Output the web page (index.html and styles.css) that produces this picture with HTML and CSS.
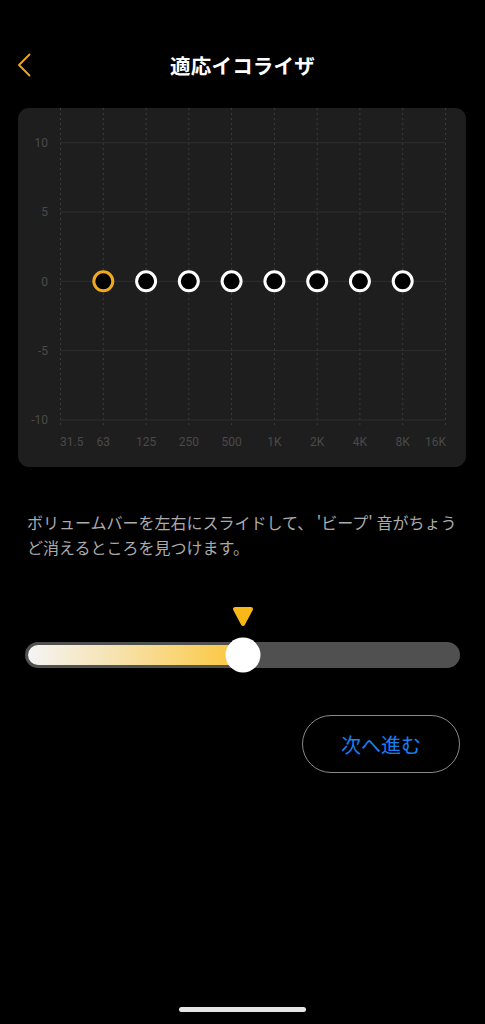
FILE: index.html
```html
<!DOCTYPE html>
<html lang="ja">
<head>
<meta charset="utf-8">
<title>適応イコライザ</title>
<link rel="stylesheet" href="styles.css">
</head>
<body>
<div class="screen">
  <header class="header">
    <button class="back" aria-label="戻る">
      <svg width="14" height="24" viewBox="0 0 14 24"><polyline points="12.5,1.5 2,12 12.5,22.5" fill="none" stroke="#f0a81c" stroke-width="1.8" stroke-linecap="round" stroke-linejoin="round"/></svg>
    </button>
    <h1 class="title">適応イコライザ</h1>
    <span class="spacer"></span>
  </header>

  <section class="card">
    <svg class="chart" width="448" height="359" viewBox="0 0 448 359">
      <g class="hlines" stroke="#2f2f2f" stroke-width="1">
        <line x1="42" y1="34.7" x2="427" y2="34.7"/>
        <line x1="42" y1="104" x2="427" y2="104"/>
        <line x1="42" y1="173.3" x2="427" y2="173.3"/>
        <line x1="42" y1="242.6" x2="427" y2="242.6"/>
        <line x1="42" y1="312" x2="427" y2="312"/>
      </g>
      <g class="vlines" stroke="#3c3c3c" stroke-width="1" stroke-dasharray="2 3">
        <line x1="42.5" y1="0" x2="42.5" y2="319"/>
        <line x1="85.3" y1="0" x2="85.3" y2="319"/>
        <line x1="128.1" y1="0" x2="128.1" y2="319"/>
        <line x1="170.8" y1="0" x2="170.8" y2="319"/>
        <line x1="213.6" y1="0" x2="213.6" y2="319"/>
        <line x1="256.4" y1="0" x2="256.4" y2="319"/>
        <line x1="299.2" y1="0" x2="299.2" y2="319"/>
        <line x1="341.9" y1="0" x2="341.9" y2="319"/>
        <line x1="384.7" y1="0" x2="384.7" y2="319"/>
        <line x1="427.5" y1="0" x2="427.5" y2="319"/>
      </g>
      <g class="ylabels" text-anchor="end">
        <text x="30" y="39">10</text>
        <text x="30" y="108">5</text>
        <text x="30" y="177.5">0</text>
        <text x="30" y="247">-5</text>
        <text x="30" y="316">-10</text>
      </g>
      <g class="xlabels" text-anchor="middle">
        <text x="42" y="338" text-anchor="start">31.5</text>
        <text x="85.3" y="338">63</text>
        <text x="128.1" y="338">125</text>
        <text x="170.8" y="338">250</text>
        <text x="213.6" y="338">500</text>
        <text x="256.4" y="338">1K</text>
        <text x="299.2" y="338">2K</text>
        <text x="341.9" y="338">4K</text>
        <text x="384.7" y="338">8K</text>
        <text x="428" y="338" text-anchor="end">16K</text>
      </g>
      <g class="points" fill="#000" stroke-width="3">
        <circle cx="85.3" cy="173.3" r="9.5" stroke="#f0a81c"/>
        <circle cx="128.1" cy="173.3" r="9.5" stroke="#fff"/>
        <circle cx="170.8" cy="173.3" r="9.5" stroke="#fff"/>
        <circle cx="213.6" cy="173.3" r="9.5" stroke="#fff"/>
        <circle cx="256.4" cy="173.3" r="9.5" stroke="#fff"/>
        <circle cx="299.2" cy="173.3" r="9.5" stroke="#fff"/>
        <circle cx="341.9" cy="173.3" r="9.5" stroke="#fff"/>
        <circle cx="384.7" cy="173.3" r="9.5" stroke="#fff"/>
      </g>
    </svg>
  </section>

  <p class="hint">ボリュームバーを左右にスライドして、 'ビープ' 音がちょうど消えるところを見つけます。</p>

  <div class="slider">
    <div class="pointer">
      <svg width="22" height="21" viewBox="0 0 22 21"><polygon points="3,3 19,3 11,18" fill="#f7b818" stroke="#f7b818" stroke-width="4" stroke-linejoin="round"/></svg>
    </div>
    <div class="track">
      <div class="fill"></div>
      <div class="thumb"></div>
    </div>
  </div>

  <div class="actions">
    <button class="next">次へ進む</button>
  </div>

  <div class="home-indicator"></div>
</div>
</body>
</html>
```

FILE: styles.css
```css
* { box-sizing: border-box; }

html, body {
  margin: 0;
  padding: 0;
  background: #000;
}

body {
  font-family: "Noto Sans CJK JP", "Noto Sans", sans-serif;
  color: #fff;
}

.screen {
  min-height: 1024px;
  display: flex;
  flex-direction: column;
}

.header {
  margin-top: 44px;
  height: 42px;
  display: grid;
  grid-template-columns: 60px 1fr 60px;
  align-items: center;
}

.back {
  background: none;
  border: 0;
  padding: 0 0 0 17px;
  margin: 0;
  display: flex;
  align-items: center;
  cursor: pointer;
}

.title {
  margin: 0;
  text-align: center;
  font-size: 20.5px;
  font-weight: 700;
  letter-spacing: 0.2px;
  color: #fff;
}

.card {
  margin: 22px 19px 0 18px;
  width: 448px;
  height: 359px;
  background: #1e1e1e;
  border-radius: 11px;
  overflow: hidden;
}

.chart {
  display: block;
}

.chart text {
  font-family: Roboto, "Noto Sans", sans-serif;
  font-size: 12px;
  fill: #4a4a4a;
}

.hint {
  margin: 43px 0 0 0;
  padding: 0 20px 0 27px;
  font-size: 16px;
  line-height: 25px;
  color: #ababab;
}

.slider {
  margin-top: 46px;
  padding: 0 25px;
}

.pointer {
  display: flex;
  justify-content: center;
  height: 21px;
}

.pointer svg {
  display: block;
}

.track {
  position: relative;
  margin-top: 15px;
  height: 26px;
  border-radius: 13px;
  background: #505050;
  padding: 3px;
}

.fill {
  width: 50%;
  height: 20px;
  border-radius: 10px 0 0 10px;
  background: linear-gradient(90deg, #f4f4f4 0%, #f7e3b0 40%, #fcc63a 100%);
}

.thumb {
  position: absolute;
  left: 50%;
  top: 50%;
  width: 35px;
  height: 35px;
  border-radius: 50%;
  background: #fff;
  transform: translate(-50%, -50%);
}

.actions {
  margin-top: 47px;
  padding-right: 25px;
  display: flex;
  justify-content: flex-end;
}

.next {
  width: 158px;
  height: 58px;
  border-radius: 29px;
  border: 1.5px solid #8a8a8a;
  background: transparent;
  color: #1a7ff5;
  font-family: "Noto Sans CJK JP", "Noto Sans", sans-serif;
  font-size: 20px;
  cursor: pointer;
}

.home-indicator {
  margin: auto auto 12px auto;
  width: 127px;
  height: 5px;
  border-radius: 3px;
  background: #e6e6e6;
}
```
